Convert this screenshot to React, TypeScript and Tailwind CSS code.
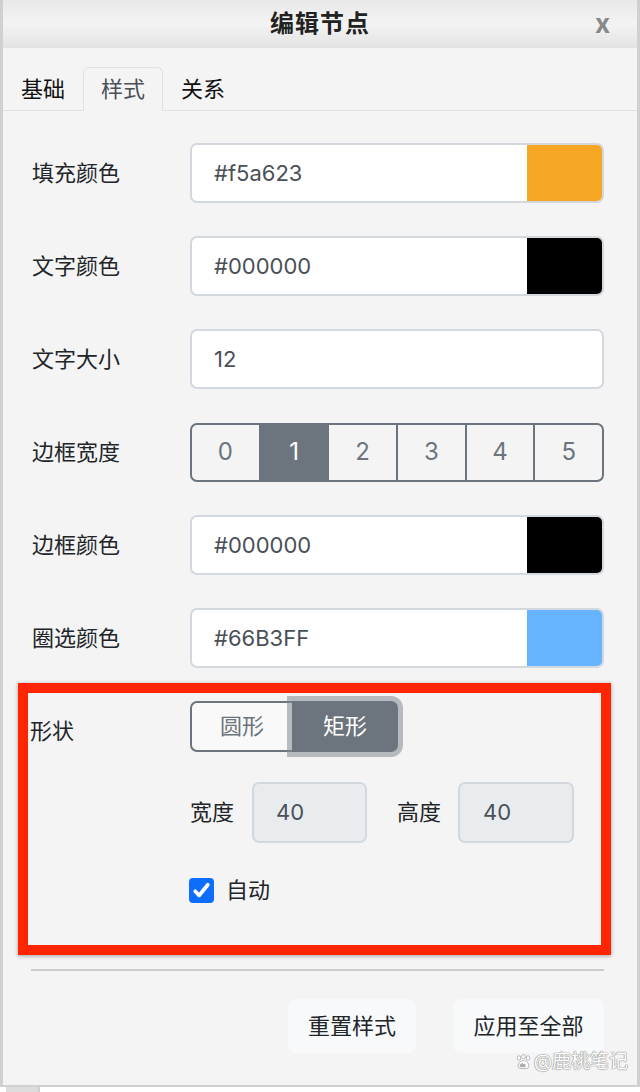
import React from 'react';

type ColorRowProps = {
  label: string;
  value: string;
  swatch?: string;
};

const ColorRow: React.FC<ColorRowProps> = ({ label, value, swatch }) => (
  <div className="flex items-center h-[60px]">
    <div className="w-[158px] text-[22px] text-[#212529]">{label}</div>
    <div className="flex-1 flex h-full border-2 border-[#d3d8de] rounded-[7px] bg-white overflow-hidden">
      <div className="flex-1 flex items-center pl-[22px] text-[22px] text-[#495057]">{value}</div>
      {swatch && <div className={`w-[75px] h-full ${swatch}`} />}
    </div>
  </div>
);

const Paw = () => (
  <svg width="17" height="15" viewBox="0 0 17 15">
    <g fill="#fff" stroke="#b0b0b0" strokeWidth="0.9">
      <ellipse cx="4" cy="4" rx="1.8" ry="2.3" />
      <ellipse cx="8.5" cy="2.6" rx="1.8" ry="2.2" />
      <ellipse cx="13" cy="4" rx="1.8" ry="2.3" />
      <path d="M8.5 6.5c-3 0-5.5 3-5.5 5.5 0 1.8 1.5 2.5 3 2.5h5c1.5 0 3-.7 3-2.5 0-2.5-2.5-5.5-5.5-5.5z" />
    </g>
    <text x="5.3" y="13" fontSize="4.5" fill="#b0b0b0" fontFamily="Liberation Sans, sans-serif">du</text>
  </svg>
);

export default function App() {
  const widths = [0, 1, 2, 3, 4, 5];

  return (
    <div className="w-[640px] h-[1092px] bg-white relative font-['Inter','Noto_Sans_CJK_SC',sans-serif]">
      <div className="h-[1087px] border-l-[3px] border-r-[3px] border-b-2 border-[#d0d0d0] bg-[#f4f4f4] flex flex-col relative">
        {/* header */}
        <div className="h-[48px] relative flex items-center justify-center bg-gradient-to-b from-[#e9e9e9] via-[#f3f3f3] to-[#e3e3e3]">
          <span className="text-[24px] font-bold text-[#222] tracking-[1px]">编辑节点</span>
          <span className="absolute right-[27px] top-[4px] text-[26px] font-bold text-[#888]">x</span>
        </div>

        {/* tabs */}
        <div className="h-[63px] flex items-end border-b border-[#dee2e6]">
          <div className="h-[44px] -mb-px px-[17px] flex items-center border border-transparent text-[22px] text-[#111]">基础</div>
          <div className="h-[44px] -mb-px px-[17px] flex items-center border border-[#dee2e6] border-b-[#f4f4f4] rounded-t-[6px] bg-[#f4f4f4] text-[22px] text-[#495057]">样式</div>
          <div className="h-[44px] -mb-px px-[17px] flex items-center border border-transparent text-[22px] text-[#111]">关系</div>
        </div>

        {/* form */}
        <div className="pl-[29px] pr-[33px] pt-[32px] flex flex-col">
          <div className="flex flex-col gap-[33px]">
            <ColorRow label="填充颜色" value="#f5a623" swatch="bg-[#f5a623]" />
            <ColorRow label="文字颜色" value="#000000" swatch="bg-black" />
            <ColorRow label="文字大小" value="12" />
            <div className="flex items-center h-[60px]">
              <div className="w-[158px] text-[22px] text-[#212529]">边框宽度</div>
              <div className="flex-1 flex h-[59px] border-2 border-[#6c757d] rounded-[7px] overflow-hidden">
                {widths.map((n) => (
                  <div
                    key={n}
                    className={
                      'flex-1 flex items-center justify-center text-[24px] ' +
                      (n === 1 ? 'bg-[#6c757d] text-white ' : 'text-[#6c757d] ') +
                      (n > 0 ? 'border-l-2 border-[#6c757d]' : '')
                    }
                  >
                    {n}
                  </div>
                ))}
              </div>
            </div>
            <ColorRow label="边框颜色" value="#000000" swatch="bg-black" />
            <ColorRow label="圈选颜色" value="#66B3FF" swatch="bg-[#66b3ff]" />
          </div>

          {/* highlighted shape block */}
          <div className="mt-[15px] -ml-[14px] -mr-[7px] border-[10px] border-[#ff2500] shadow-[0_1px_4px_rgba(0,0,0,0.35)] pl-[2px] pt-[8px] pb-[42px]">
            <div className="flex items-start">
              <div className="w-[160px] pt-[14px] text-[22px] text-[#212529]">形状</div>
              <div className="flex h-[51px]">
                <div className="w-[102px] flex items-center justify-center border-2 border-r-0 border-[#6c757d] rounded-l-[7px] bg-[#f9f9f9] text-[22px] text-[#6c757d]">圆形</div>
                <div className="w-[106px] flex items-center justify-center rounded-r-[7px] bg-[#6c757d] text-[22px] text-white relative z-10 shadow-[0_0_0_5px_rgba(130,138,145,0.55)]">矩形</div>
              </div>
            </div>

            <div className="mt-[30px] ml-[160px] flex items-center">
              <span className="text-[22px] text-[#212529]">宽度</span>
              <div className="ml-[18px] w-[115px] h-[61px] flex items-center pl-[22px] border-2 border-[#d3d8de] rounded-[7px] bg-[#e9ecef] text-[22px] text-[#495057]">40</div>
              <span className="ml-[30px] text-[22px] text-[#212529]">高度</span>
              <div className="ml-[17px] w-[116px] h-[61px] flex items-center pl-[23px] border-2 border-[#d3d8de] rounded-[7px] bg-[#e9ecef] text-[22px] text-[#495057]">40</div>
            </div>

            <div className="mt-[34px] ml-[159px] flex items-center h-[26px]">
              <div className="w-[25px] h-[25px] rounded-[4px] bg-[#0d6efd] flex items-center justify-center">
                <svg width="21" height="21" viewBox="0 0 16 16">
                  <path d="M3.2 8.6l3 3.2L12.8 3.6" fill="none" stroke="#fff" strokeWidth="2.8" strokeLinecap="round" strokeLinejoin="round" />
                </svg>
              </div>
              <span className="ml-[12px] text-[22px] text-[#212529]">自动</span>
            </div>
          </div>

          <div className="mt-[14px] -ml-px h-[2px] bg-[#cbcbcb]" />

          <div className="mt-[28px] flex justify-end gap-[37px]">
            <div className="w-[128px] h-[54px] rounded-[8px] bg-[#f8f9fa] flex items-center justify-center text-[22px] text-[#212529]">重置样式</div>
            <div className="w-[151px] h-[54px] rounded-[8px] bg-[#f8f9fa] flex items-center justify-center text-[22px] text-[#212529]">应用至全部</div>
          </div>
        </div>

        {/* watermark */}
        <div className="absolute right-[9px] bottom-[9px] flex items-center gap-[2px] text-[19px] text-white [text-shadow:0_0_1px_#8a8a8a,0_0_1px_#8a8a8a,0_0_1px_#8a8a8a]">
          <Paw />
          <span>@鹿桃笔记</span>
        </div>
      </div>
      <div className="absolute left-[6px] top-[1087px] w-[34px] h-[5px] bg-[#dcdcdc] border-r-2 border-[#cfcfcf]" />
    </div>
  );
}
